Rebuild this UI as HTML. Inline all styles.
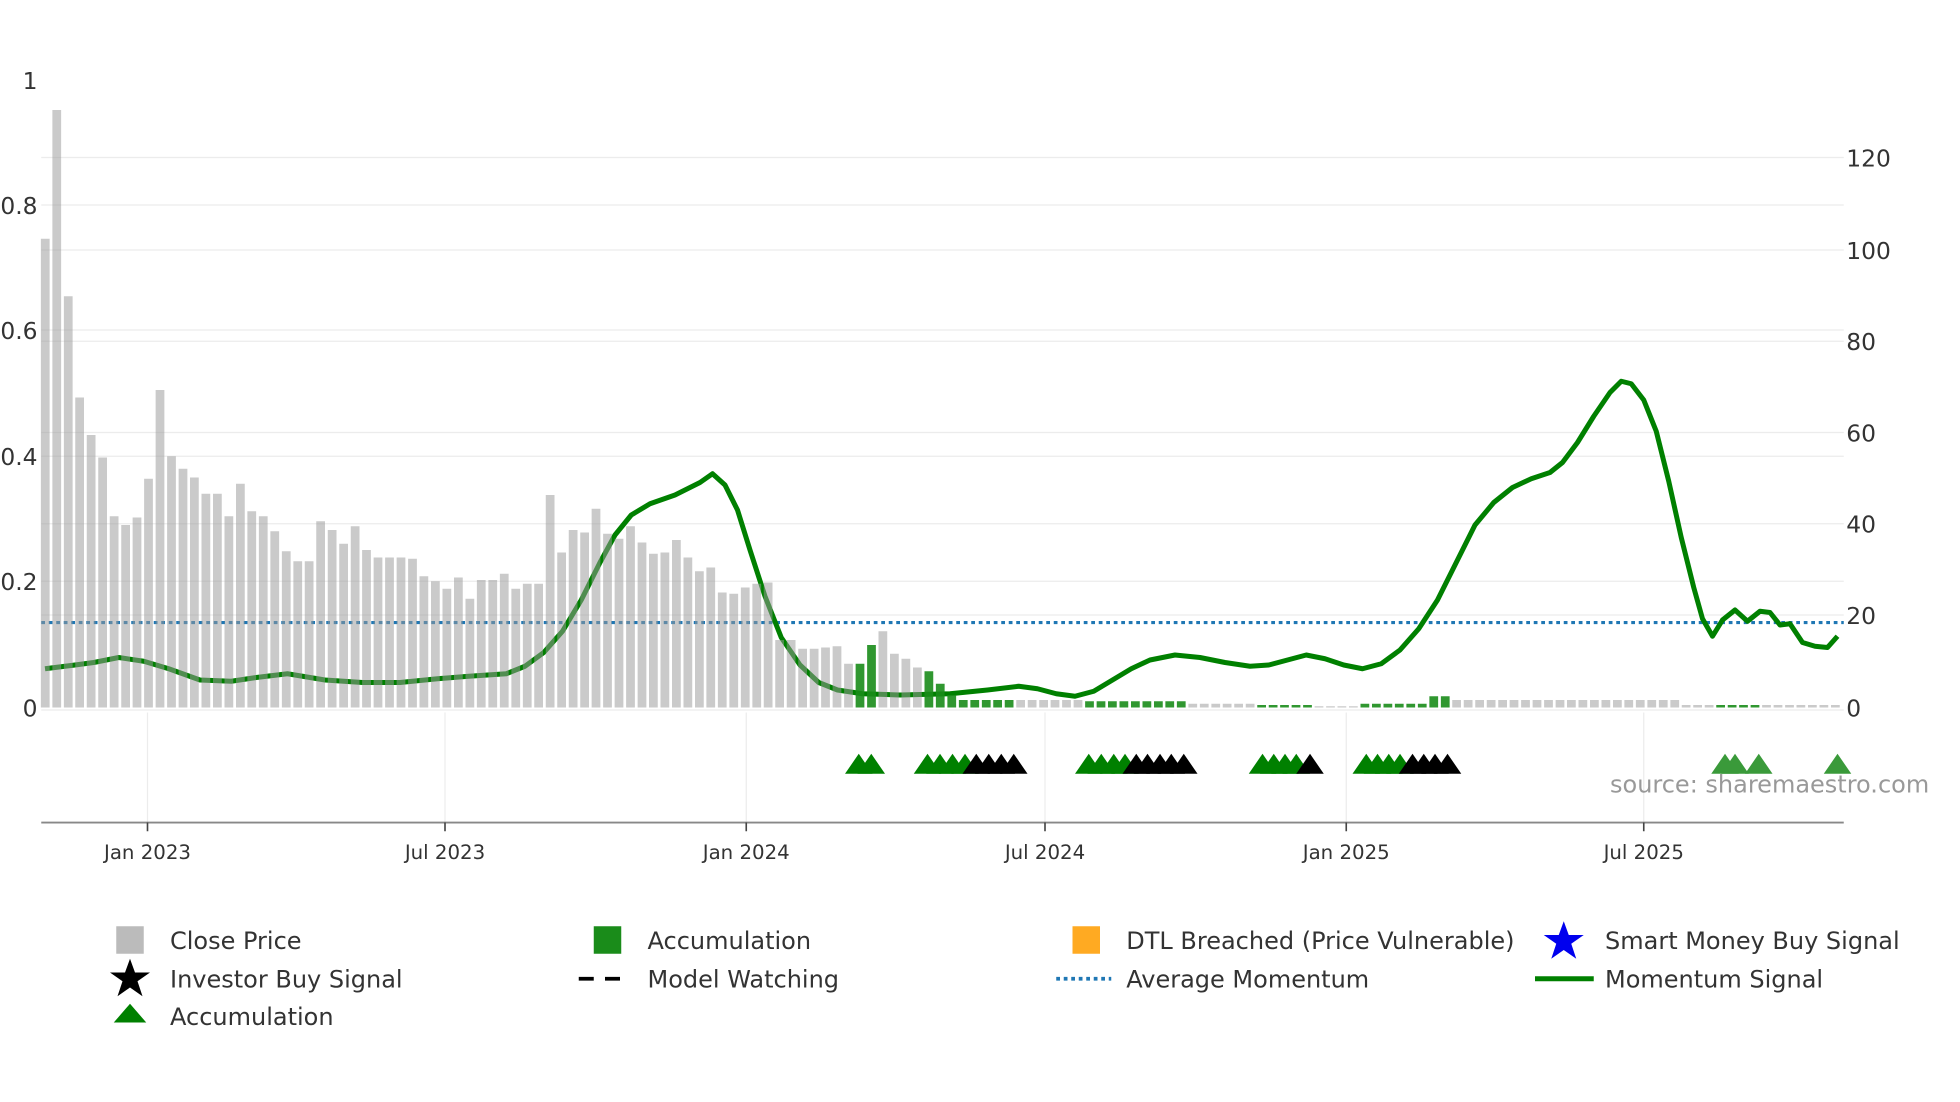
<!DOCTYPE html>
<html><head><meta charset="utf-8"><style>
html,body{margin:0;padding:0;background:#fff;}
svg{display:block;}
text{font-family:"DejaVu Sans","Liberation Sans",sans-serif;}
</style></head><body>
<svg id="s" width="1960" height="1102" viewBox="0 0 1568 881.6" preserveAspectRatio="none" xmlns="http://www.w3.org/2000/svg">
<rect width="1568" height="882" fill="#fff"/>
<g stroke="#ececec" stroke-width="1">
<line x1="33" x2="1475" y1="126" y2="126"/><line x1="33" x2="1475" y1="200" y2="200"/>
<line x1="33" x2="1475" y1="273" y2="273"/><line x1="33" x2="1475" y1="346" y2="346"/>
<line x1="33" x2="1475" y1="419" y2="419"/><line x1="33" x2="1475" y1="492" y2="492"/>
<line x1="33" x2="1475" y1="164" y2="164"/><line x1="33" x2="1475" y1="264" y2="264"/>
<line x1="33" x2="1475" y1="365" y2="365"/><line x1="33" x2="1475" y1="465" y2="465"/>
<line x1="33" x2="1475" y1="568" y2="568"/>
<line x1="118" x2="118" y1="570" y2="658"/><line x1="356" x2="356" y1="570" y2="658"/>
<line x1="597" x2="597" y1="570" y2="658"/><line x1="836" x2="836" y1="570" y2="658"/>
<line x1="1077" x2="1077" y1="570" y2="658"/><line x1="1315" x2="1315" y1="570" y2="658"/>
</g>
<line x1="33" x2="1475" y1="498" y2="498" stroke="#1f77b4" stroke-width="2.5" stroke-dasharray="3,3"/>
<path id="mom" fill="none" stroke="#008000" stroke-width="4" stroke-linejoin="round" d=""/>
<g id="bars"></g>
<g id="tri"></g>
<line x1="33" x2="1475" y1="658" y2="658" stroke="#888" stroke-width="1.5"/>
<g stroke="#444" stroke-width="1.3">
<line x1="118" x2="118" y1="658" y2="665"/><line x1="356" x2="356" y1="658" y2="665"/>
<line x1="597" x2="597" y1="658" y2="665"/><line x1="836" x2="836" y1="658" y2="665"/>
<line x1="1077" x2="1077" y1="658" y2="665"/><line x1="1315" x2="1315" y1="658" y2="665"/>
</g>
<g font-size="15.8" fill="#333" text-anchor="middle">
<text x="118" y="687">Jan 2023</text><text x="356" y="687">Jul 2023</text>
<text x="597" y="687">Jan 2024</text><text x="836" y="687">Jul 2024</text>
<text x="1077" y="687">Jan 2025</text><text x="1315" y="687">Jul 2025</text>
</g>
<g font-size="18.7" fill="#333" text-anchor="end">
<text x="30" y="71">1</text><text x="30" y="171">0.8</text><text x="30" y="271">0.6</text>
<text x="30" y="372">0.4</text><text x="30" y="472">0.2</text><text x="30" y="573">0</text>
</g>
<g font-size="18.7" fill="#333">
<text x="1477" y="133">120</text><text x="1477" y="207">100</text><text x="1477" y="280">80</text>
<text x="1477" y="353">60</text><text x="1477" y="426">40</text><text x="1477" y="499">20</text><text x="1477" y="573">0</text>
</g>
<text x="1288" y="634" font-size="19.2" fill="#999">source: sharemaestro.com</text>
<g font-size="19.2" fill="#333">
<rect x="93" y="741" width="22" height="22" fill="#bbb"/><text x="136" y="759">Close Price</text>
<rect x="475" y="741" width="22" height="22" fill="#1a8c1a"/><text x="518" y="759">Accumulation</text>
<rect x="858" y="741" width="22" height="22" fill="#ffaa22"/><text x="901" y="759">DTL Breached (Price Vulnerable)</text>
<polygon fill="#0000ee" points="1251,737 1255,748 1267,748 1257,755 1261,767 1251,760 1241,767 1245,755 1235,748 1247,748"/><text x="1284" y="759">Smart Money Buy Signal</text>
<polygon fill="#000" points="104,767 108,778 120,778 110,785 114,797 104,790 94,797 98,785 88,778 100,778"/><text x="136" y="790">Investor Buy Signal</text>
<line x1="463" x2="505" y1="783" y2="783" stroke="#000" stroke-width="3" stroke-dasharray="12,9"/><text x="518" y="790">Model Watching</text>
<line x1="845" x2="889" y1="783" y2="783" stroke="#1f77b4" stroke-width="3" stroke-dasharray="3,3"/><text x="901" y="790">Average Momentum</text>
<line x1="1228" x2="1275" y1="783" y2="783" stroke="#008000" stroke-width="4"/><text x="1284" y="790">Momentum Signal</text>
<polygon fill="#008000" points="104,803 117,818 91,818"/><text x="136" y="820">Accumulation</text>
</g>
</svg>
<script>
var pts=[[36,535],[60,532],[75,530],[95,526],[115,529],[135,535],[160,544],[185,545],[205,542],[230,539],[260,544],[290,546],[320,546],[350,543],[375,541],[405,539],[420,533],[435,522],[450,505],[465,480],[480,450],[492,428],[505,412],[520,403],[540,396],[560,386],[570,379],[580,388],[590,408],[600,440],[612,477],[625,510],[640,532],[655,546],[670,552],[690,555],[720,556],[760,555],[790,552],[815,549],[830,551],[845,555],[860,557],[875,553],[890,544],[905,535],[920,528],[940,524],[960,526],[980,530],[1000,533],[1015,532],[1030,528],[1045,524],[1060,527],[1075,532],[1090,535],[1105,531],[1120,520],[1135,503],[1150,480],[1165,450],[1180,420],[1195,402],[1210,390],[1225,383],[1240,378],[1250,370],[1262,354],[1275,333],[1288,314],[1297,305],[1305,307],[1315,320],[1325,345],[1335,385],[1345,430],[1355,470],[1362,495],[1370,509],[1378,496],[1388,488],[1398,497],[1408,489],[1416,490],[1424,500],[1432,499],[1442,514],[1452,517],[1462,518],[1470,509]];
var d="M"+pts[0][0]+","+pts[0][1];
for(var i=1;i<pts.length;i++){d+=" L"+pts[i][0]+","+pts[i][1];}
document.getElementById("mom").setAttribute("d",d);
var tops=[191,88,237,318,348,366,413,420,414,383,312,365,375,382,395,395,413,387,409,413,425,441,449,449,417,424,435,421,440,446,446,446,447,461,465,471,462,479,464,464,459,471,467,467,396,442,424,426,407,427,431,421,434,443,442,432,446,457,454,474,475,470,467,466,512,512,519,519,518,517,531,531,516,505,523,527,534,537,547,556];
var greenIdx={71:1,72:1,77:1,78:1,79:1};
var h="";
var sp=9.18,n=Math.floor((1472-36)/sp)+1;
for(var i=0;i<n;i++){
 var x=36+i*sp,t,gr=false;
 if(i<tops.length){t=tops[i];gr=!!greenIdx[i];}
 else{
  if(x<815){t=560;gr=true;}
  else if(x<868){t=560;}
  else if(x<952){t=561;gr=true;}
  else if(x<1005){t=563;}
  else if(x<1052){t=564;gr=true;}
  else if(x<1088){t=565;}
  else if(x<1144){t=563;gr=true;}
  else if(x<1160){t=557;gr=true;}
  else if(x<1345){t=560;}
  else {t=564;gr=(x>1375&&x<1412);}
 }
 var fill=gr?"#1a8c1a":"#999";var op=gr?0.9:0.52;
 h+='<rect x="'+(x-3.3).toFixed(1)+'" y="'+t+'" width="7" height="'+(566-t)+'" fill="'+fill+'" fill-opacity="'+op+'"/>';
}
document.getElementById("bars").innerHTML=h;
var tri=[[687,"#008000"],[697,"#008000"],[742,"#008000"],[752,"#008000"],[762,"#008000"],[772,"#008000"],[781,"#000"],[791,"#000"],[801,"#000"],[811,"#000"],[871,"#008000"],[881,"#008000"],[891,"#008000"],[900,"#008000"],[909,"#000"],[918,"#000"],[928,"#000"],[937,"#000"],[947,"#000"],[1010,"#008000"],[1019,"#008000"],[1028,"#008000"],[1037,"#008000"],[1048,"#000"],[1093,"#008000"],[1102,"#008000"],[1111,"#008000"],[1120,"#008000"],[1130,"#000"],[1139,"#000"],[1148,"#000"],[1158,"#000"],[1380,"#3a9a3a"],[1388,"#3a9a3a"],[1407,"#3a9a3a"],[1470,"#3a9a3a"]];
var th="";
tri.forEach(function(t){th+='<polygon fill="'+t[1]+'" points="'+t[0]+',603 '+(t[0]+11)+',619 '+(t[0]-11)+',619"/>';});
document.getElementById("tri").innerHTML=th;
</script>
</body></html>
